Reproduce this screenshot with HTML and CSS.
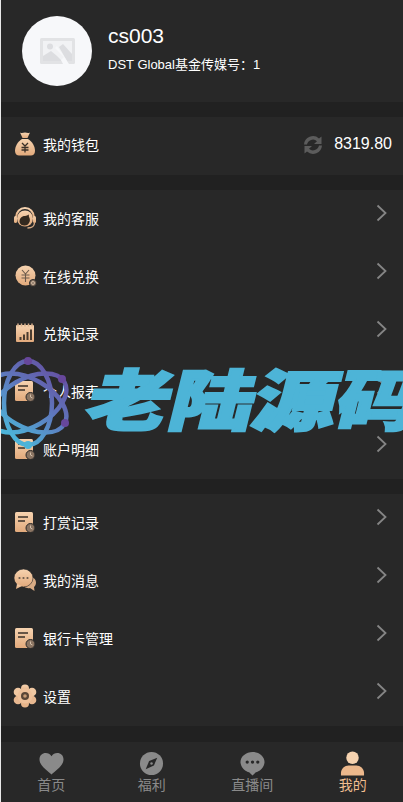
FILE: index.html
```html
<!DOCTYPE html>
<html lang="zh">
<head>
<meta charset="utf-8">
<title>我的</title>
<link rel="stylesheet" href="styles.css">
</head>
<body>
<svg class="defs" width="0" height="0" aria-hidden="true">
  <defs>
    <linearGradient id="gold" x1="0" y1="0" x2="0" y2="1">
      <stop offset="0" stop-color="#f6d3b0"/>
      <stop offset="1" stop-color="#e2aa7c"/>
    </linearGradient>
    <linearGradient id="orbit" gradientUnits="userSpaceOnUse" x1="70" y1="15" x2="10" y2="85">
      <stop offset="0" stop-color="#67479b"/>
      <stop offset="0.5" stop-color="#5f74bb"/>
      <stop offset="1" stop-color="#4db4d9"/>
    </linearGradient>
    <symbol id="report" viewBox="0 0 24 24">
      <rect x="2" y="2" width="18" height="20" rx="1.500" fill="url(#gold)"/>
      <path d="M5 7h10M5 11h7" stroke="#3a3028" stroke-width="1.300"/>
      <circle cx="17.500" cy="18" r="4.500" fill="#8a7462" stroke="#282828" stroke-width="1"/>
      <path d="M17.500 15.500V18l2 1" fill="none" stroke="#d9c5b0" stroke-width="0.900"/>
    </symbol>
    <symbol id="chev" viewBox="0 0 11 18">
      <path d="M1.500 1.500 9.500 9l-8 7.500" fill="none" stroke="#858585" stroke-width="1.800"/>
    </symbol>
  </defs>
</svg>

<div class="page">
  <header class="profile">
    <div class="avatar">
      <svg class="avatar-img" viewBox="0 0 35 26">
        <rect width="35" height="26" rx="1.500" fill="#e2e3e5"/>
        <rect x="3" y="3" width="29" height="20" fill="#f1f2f4"/>
        <circle cx="10" cy="8.500" r="3" fill="#dcdde0"/>
        <path d="M3 23v-5l8-5 6 5 5 5z" fill="#dcdde0"/>
        <path d="M19 9l4-3 9 10v7h-5z" fill="#dcdde0"/>
        <path d="M17 8l12 18h-6l-2-4 3-3-9-9z" fill="#f7f8fa"/>
      </svg>
    </div>
    <div class="who">
      <div class="name">cs003</div>
      <div class="uid">DST Global基金传媒号：1</div>
    </div>
  </header>

  <section class="block wallet">
    <svg class="ico" viewBox="0 0 24 24">
      <path d="M7 .5c2 1.200 3.500 0 5 0s3 1.200 5 0l-2.500 5.500h-5z" fill="url(#gold)"/>
      <path d="M9 7h6c4 2.500 7 7 7 12 0 3-2 4.500-4 4.500H6c-2 0-4-1.500-4-4.500 0-5 3-9.500 7-12z" fill="url(#gold)"/>
      <path d="M9 11l3 3 3-3M12 14v6.500M8.500 15.500h7M8.500 18h7" fill="none" stroke="#3a3028" stroke-width="1.300"/>
    </svg>
    <span class="label">我的钱包</span>
    <svg class="refresh" viewBox="0 0 20 20">
      <path d="M1 9.500A9 9 0 0 1 16 3.500L18.500 1.500v7.500H11l3-2.700A6 6 0 0 0 4 9.500z" fill="#5c5c5c"/>
      <path d="M19 10.500A9 9 0 0 1 4 16.500L1.500 18.500V11H9l-3 2.700a6 6 0 0 0 10-3.200z" fill="#5c5c5c"/>
    </svg>
    <span class="amount">8319.80</span>
  </section>

  <section class="block">
    <div class="row">
      <svg class="ico" viewBox="0 0 24 24">
        <path d="M3 11.500a9 9.500 0 0 1 18 0" fill="none" stroke="url(#gold)" stroke-width="2"/>
        <circle cx="12" cy="12.500" r="8" fill="url(#gold)"/>
        <path d="M6.500 16c0-3.500 2-6 5.500-6 1.500 0 2.500-1 4-1.500-.5 1.500 0 2.500.5 3.500.5 1.500.5 3 0 4-1 2.500-2.500 3.500-5 3.500s-4.500-1-5-3.500z" fill="#33291f"/>
        <rect x="1" y="10" width="3" height="7" rx="1.500" fill="url(#gold)"/>
        <rect x="20" y="10" width="3" height="7" rx="1.500" fill="url(#gold)"/>
        <path d="M21.500 16.500c0 3.500-3 5.500-7 5.500" fill="none" stroke="#d8ab84" stroke-width="1.300"/>
      </svg>
      <span class="label">我的客服</span>
      <svg class="chev"><use href="#chev"/></svg>
    </div>
    <div class="row">
      <svg class="ico" viewBox="0 0 24 24">
        <circle cx="12.500" cy="11.500" r="10" fill="url(#gold)"/>
        <path d="M9 6l3.500 4L16 6M12.500 10v8M8.500 11h8M8.500 14h8" fill="none" stroke="#6b5a4c" stroke-width="1.100"/>
        <circle cx="20" cy="19" r="3.500" fill="#8a7462" stroke="#282828"/>
        <circle cx="20" cy="19" r="1.500" fill="none" stroke="#d9c5b0" stroke-width="0.800"/>
      </svg>
      <span class="label">在线兑换</span>
      <svg class="chev"><use href="#chev"/></svg>
    </div>
    <div class="row">
      <svg class="ico" viewBox="0 0 24 24">
        <rect x="3" y="4" width="18" height="17" rx="1" fill="url(#gold)"/>
        <path d="M5 2.500v3M8.500 2.500v3M12 2.500v3M15.500 2.500v3M19 2.500v3" stroke="#d8b08c" stroke-width="1.500"/>
        <path d="M6.500 16h2v3h-2zM10 13.500h2V19h-2zM13.500 11h2v8h-2zM17 8.500h2V19h-2z" fill="#4a3c30"/>
      </svg>
      <span class="label">兑换记录</span>
      <svg class="chev"><use href="#chev"/></svg>
    </div>
    <div class="row">
      <svg class="ico"><use href="#report"/></svg>
      <span class="label">个人报表</span>
      <svg class="chev"><use href="#chev"/></svg>
    </div>
    <div class="row">
      <svg class="ico"><use href="#report"/></svg>
      <span class="label">账户明细</span>
      <svg class="chev"><use href="#chev"/></svg>
    </div>
  </section>

  <section class="block tall">
    <div class="row">
      <svg class="ico"><use href="#report"/></svg>
      <span class="label">打赏记录</span>
      <svg class="chev"><use href="#chev"/></svg>
    </div>
    <div class="row">
      <svg class="ico" viewBox="0 0 24 24">
        <path d="M19 9c2.500 1 4 3 4 5.500 0 2-1 3.500-2 4.500l.5 4-4.500-3c-2 .5-4 0-5.500-1z" fill="#d8ab84"/>
        <ellipse cx="10.500" cy="10" rx="9.500" ry="9" fill="url(#gold)" stroke="#282828" stroke-width="0.600"/>
        <path d="M4 16l-1 5 6-3z" fill="url(#gold)"/>
        <circle cx="6.500" cy="10" r="1.100" fill="#6b5a4c"/>
        <circle cx="10.500" cy="10" r="1.100" fill="#6b5a4c"/>
        <circle cx="14.500" cy="10" r="1.100" fill="#6b5a4c"/>
      </svg>
      <span class="label">我的消息</span>
      <svg class="chev"><use href="#chev"/></svg>
    </div>
    <div class="row">
      <svg class="ico"><use href="#report"/></svg>
      <span class="label">银行卡管理</span>
      <svg class="chev"><use href="#chev"/></svg>
    </div>
    <div class="row">
      <svg class="ico" viewBox="0 0 24 24">
        <circle cx="12" cy="4.500" r="4" fill="url(#gold)"/>
        <circle cx="12" cy="19.500" r="4" fill="#e6b48a"/>
        <circle cx="5" cy="8" r="4.300" fill="#f0c8a2"/>
        <circle cx="19" cy="8" r="4.300" fill="#f0c8a2"/>
        <circle cx="5" cy="16" r="4.300" fill="#e8b890"/>
        <circle cx="19" cy="16" r="4.300" fill="#e8b890"/>
        <circle cx="12" cy="12" r="7.500" fill="#eec19a"/>
        <circle cx="12" cy="12" r="4" fill="#5a4636"/>
        <circle cx="12" cy="12" r="1.800" fill="#c79a74"/>
      </svg>
      <span class="label">设置</span>
      <svg class="chev"><use href="#chev"/></svg>
    </div>
  </section>

  <nav class="tabbar">
    <div class="tab">
      <svg class="tab-ico" viewBox="0 0 26 26">
        <path d="M13 24.500C9 20.500 .5 15.500 .5 8.500c0-4 3-6.500 6.500-6.500 2.500 0 4.500 1 6 3.500C14.500 3 16.500 2 19 2c3.500 0 6.500 2.500 6.500 6.500 0 7-8.500 12-12.500 16z" fill="#8a8a8a"/>
      </svg>
      <span>首页</span>
    </div>
    <div class="tab">
      <svg class="tab-ico" viewBox="0 0 26 26">
        <circle cx="13" cy="13" r="12" fill="#8a8a8a"/>
        <path d="M19 7l-3.500 8L7 19l3.500-8.500z" fill="#282828"/>
        <circle cx="13" cy="13" r="1.300" fill="#8a8a8a"/>
      </svg>
      <span>福利</span>
    </div>
    <div class="tab">
      <svg class="tab-ico" viewBox="0 0 26 26">
        <path d="M13 1c6.500 0 12.500 4.500 12.500 10.500S19.500 22 16.500 22L13 25.500 9.500 22C6.500 22 .5 17.500 .5 11.500S6.500 1 13 1z" fill="#8a8a8a"/>
        <circle cx="7.500" cy="11.500" r="1.700" fill="#282828"/>
        <circle cx="13" cy="11.500" r="1.700" fill="#282828"/>
        <circle cx="18.500" cy="11.500" r="1.700" fill="#282828"/>
      </svg>
      <span>直播间</span>
    </div>
    <div class="tab active">
      <svg class="tab-ico" viewBox="0 0 26 26">
        <circle cx="13" cy="7" r="6.500" fill="#f6d3b0"/>
        <path d="M1 25.500v-2.500c0-5 4-8 8-8h8c4 0 8 3 8 8v2.500z" fill="#ecb88c"/>
      </svg>
      <span>我的</span>
    </div>
  </nav>

  <div class="watermark">
    <svg class="wm-logo" viewBox="0 0 80 100">
      <g fill="none" stroke="url(#orbit)" stroke-width="4.500">
        <path d="M28 11A24 42 0 0 1 28 95A24 42 0 0 1 28 11z"/>
        <path d="M-8.400 32A42 24 30 0 1 64.400 74A42 24 30 0 1 -8.400 32z"/>
        <path d="M-8.400 74A42 24 -30 0 1 64.400 32A42 24 -30 0 1 -8.400 74z"/>
      </g>
      <circle cx="28" cy="11" r="4" fill="#67479b"/>
      <circle cx="62" cy="29" r="4" fill="#67479b"/>
      <circle cx="65" cy="73" r="4" fill="#67479b"/>
      <circle cx="28" cy="95" r="4" fill="#4db4d9"/>
    </svg>
    <div class="wm-text">老陆源码</div>
  </div>
</div>
</body>
</html>
```
FILE: styles.css
```css
* { box-sizing: border-box; }
html, body { margin: 0; padding: 0; }
body {
  width: 403px;
  height: 802px;
  overflow: hidden;
  background: #e9e9e9;
  font-family: "Liberation Sans", "Noto Sans CJK SC", sans-serif;
  color: #fff;
}
.defs { position: absolute; }
.page {
  position: relative;
  margin-left: 1px;
  width: 402px;
  height: 802px;
  background: #212121;
  display: flex;
  flex-direction: column;
  overflow: hidden;
}
.profile {
  flex: none;
  height: 102px;
  margin-bottom: 15px;
  background: #282828;
  display: flex;
  align-items: flex-start;
  padding: 16px 0 0 21px;
  gap: 16px;
}
.avatar {
  width: 70px;
  height: 70px;
  border-radius: 50%;
  background: #f7f8fa;
  display: flex;
  align-items: center;
  justify-content: center;
}
.avatar-img { width: 35px; height: 26px; }
.who { padding-top: 8px; }
.name { font-size: 21px; line-height: 23px; }
.uid { font-size: 13px; line-height: 18px; margin-top: 9px; }
.block { flex: none; background: #282828; margin-bottom: 15px; }
.block.tall { margin-bottom: 16px; }
.block.tall .row { height: 58px; }
.wallet {
  height: 58px;
  display: flex;
  align-items: center;
  padding: 0 11px 4px 12px;
}
.row {
  position: relative;
  height: 57.8px;
  display: flex;
  align-items: center;
  padding: 0 0 2px 12px;
}
.ico { width: 24px; height: 24px; flex: none; }
.label { font-size: 14px; margin-left: 6px; }
.refresh { width: 20px; height: 20px; margin-left: auto; margin-right: 11px; margin-top: 2px; }
.amount { font-size: 16px; }
.chev {
  position: absolute;
  right: 16px;
  top: 14px;
  width: 11px;
  height: 18px;
}
.tabbar {
  flex: 1;
  background: #282828;
  display: flex;
}
.tab {
  flex: 1;
  display: flex;
  flex-direction: column;
  align-items: center;
  padding-top: 9px;
  font-size: 14px;
  line-height: 16px;
  color: #8a8a8a;
}
.tab.active { color: #f0bd90; }
.tab-ico { width: 25px; height: 25px; margin-bottom: 1px; }
.watermark {
  position: absolute;
  left: -1px;
  top: 350px;
  width: 403px;
  height: 100px;
  pointer-events: none;
}
.wm-logo {
  position: absolute;
  left: 0;
  top: 0;
  width: 80px;
  height: 100px;
  overflow: visible;
}
.wm-text {
  position: absolute;
  left: 90px;
  top: 1px;
  font-family: "Noto Sans CJK SC", sans-serif;
  font-weight: 900;
  font-size: 66px;
  line-height: 90px;
  white-space: nowrap;
  color: #4db4d7;
  -webkit-text-stroke: 2.5px #4db4d7;
  transform-origin: left center;
  transform: skewX(-14deg) scaleX(1.26);
}
```
